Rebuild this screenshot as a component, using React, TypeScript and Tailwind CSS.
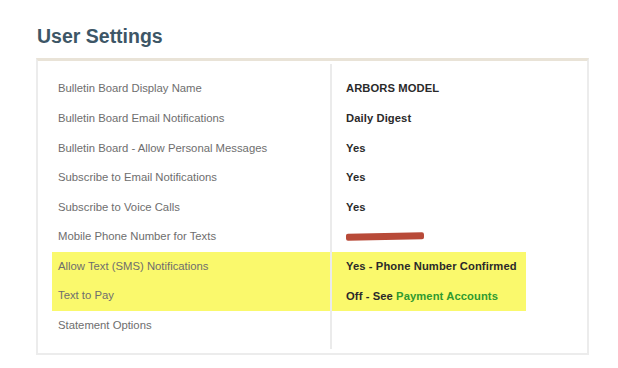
const rows = [
  { label: 'Bulletin Board Display Name', value: 'ARBORS MODEL' },
  { label: 'Bulletin Board Email Notifications', value: 'Daily Digest' },
  { label: 'Bulletin Board - Allow Personal Messages', value: 'Yes' },
  { label: 'Subscribe to Email Notifications', value: 'Yes' },
  { label: 'Subscribe to Voice Calls', value: 'Yes' },
  { label: 'Mobile Phone Number for Texts', value: 'redacted' },
  { label: 'Allow Text (SMS) Notifications', value: 'Yes - Phone Number Confirmed', hl: true },
  { label: 'Text to Pay', value: 'link', hl: true },
  { label: 'Statement Options', value: '' },
];

function Value({ value }: { value: string }) {
  if (value === 'redacted') {
    return <span className="block w-[78px] h-[7px] rounded-[2px] bg-[#b84a38] -rotate-[1deg]" />;
  }
  if (value === 'link') {
    return (
      <span>
        Off - See <span className="text-[#2f9a2f]">Payment Accounts</span>
      </span>
    );
  }
  return <span>{value}</span>;
}

export default function App() {
  return (
    <div className="w-[618px] h-[368px] bg-white font-['Liberation_Sans',Arial,sans-serif] pt-[24px] pl-[36px]">
      <h1 className="text-[19.5px] font-bold text-[#3d5666] leading-[24px] pl-[1px]">User Settings</h1>
      <div className="mt-[10px] w-[553px] h-[297px] border-2 border-[#ececec] border-t-[3px] border-t-[#e9e3d7] flex">
        <div className="w-[292px] pl-[14px] pt-[13px]">
          {rows.map((r) => (
            <div
              key={r.label}
              className={`h-[29.6px] flex items-center pl-[6px] text-[11.3px] text-[#6e6e6e] ${r.hl ? 'bg-[#faf96c]' : ''}`}
            >
              {r.label}
            </div>
          ))}
        </div>
        <div className="mt-[3px] mb-[4px] border-l-2 border-[#ebebeb] pt-[10px]">
          {rows.map((r) => (
            <div
              key={r.label}
              className={`h-[29.6px] w-[194px] flex items-center pl-[14px] text-[11.2px] font-bold text-[#2a2a2a] tracking-[0.1px] ${r.hl ? 'bg-[#faf96c]' : ''}`}
            >
              <Value value={r.value} />
            </div>
          ))}
        </div>
      </div>
    </div>
  );
}
